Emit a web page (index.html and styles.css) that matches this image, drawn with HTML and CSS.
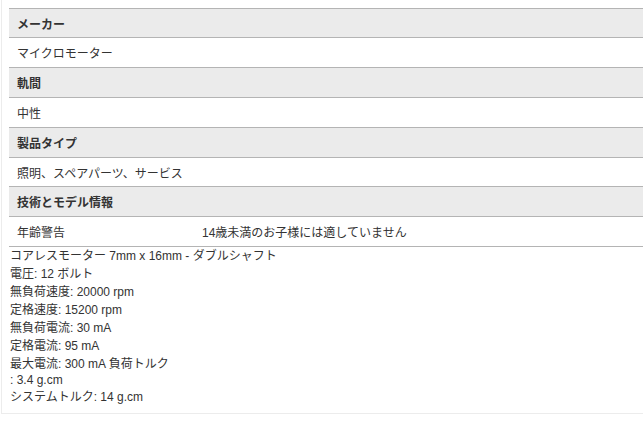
FILE: index.html
```html
<!DOCTYPE html>
<html lang="ja">
<head>
<meta charset="utf-8">
<link rel="stylesheet" href="styles.css">
</head>
<body>
<div class="panel">
  <table class="spec">
    <tr class="head tight"><th colspan="2">メーカー</th></tr>
    <tr><td colspan="2">マイクロモーター</td></tr>
    <tr class="head"><th colspan="2">軌間</th></tr>
    <tr><td colspan="2">中性</td></tr>
    <tr class="head"><th colspan="2">製品タイプ</th></tr>
    <tr class="tight"><td colspan="2">照明、スペアパーツ、サービス</td></tr>
    <tr class="head"><th colspan="2">技術とモデル情報</th></tr>
    <tr><td class="label">年齢警告</td><td>14歳未満のお子様には適していません</td></tr>
  </table>
  <div class="desc">
    <div class="line">コアレスモーター 7mm x 16mm - ダブルシャフト</div>
    <div class="line">電圧: 12 ボルト</div>
    <div class="line">無負荷速度: 20000 rpm</div>
    <div class="line">定格速度: 15200 rpm</div>
    <div class="line">無負荷電流: 30 mA</div>
    <div class="line">定格電流: 95 mA</div>
    <div class="line">最大電流: 300 mA 負荷トルク</div>
    <div class="line short">: 3.4 g.cm</div>
    <div class="line">システムトルク: 14 g.cm</div>
  </div>
</div>
</body>
</html>
```

FILE: styles.css
```css
html, body {
  margin: 0;
  padding: 0;
  background: #ffffff;
}
body {
  font-family: "Liberation Sans", "Noto Sans CJK JP", sans-serif;
  font-size: 12px;
  color: #333333;
}
.panel {
  margin-left: 1px;
  border-left: 1px solid #ececec;
  border-bottom: 1px solid #ececec;
  padding: 8px 0 7px 7px;
}
.spec {
  width: 100%;
  border-collapse: collapse;
  border-top: 1px solid #b4b4b4;
}
.spec th, .spec td {
  height: 30px;
  padding: 0 8px;
  text-align: left;
  vertical-align: middle;
  border-bottom: 1px solid #b4b4b4;
  box-sizing: border-box;
}
.spec .tight th, .spec .tight td {
  height: 29px;
}
.spec th {
  background: #ebebeb;
  font-weight: bold;
  color: #333333;
}
.spec td {
  background: #ffffff;
}
.spec td.label {
  width: 185px;
}
.desc {
  padding-left: 1px;
  color: #333333;
}
.line {
  height: 18px;
  line-height: 18px;
  white-space: nowrap;
}
.line.short {
  height: 15px;
  line-height: 15px;
}
```
